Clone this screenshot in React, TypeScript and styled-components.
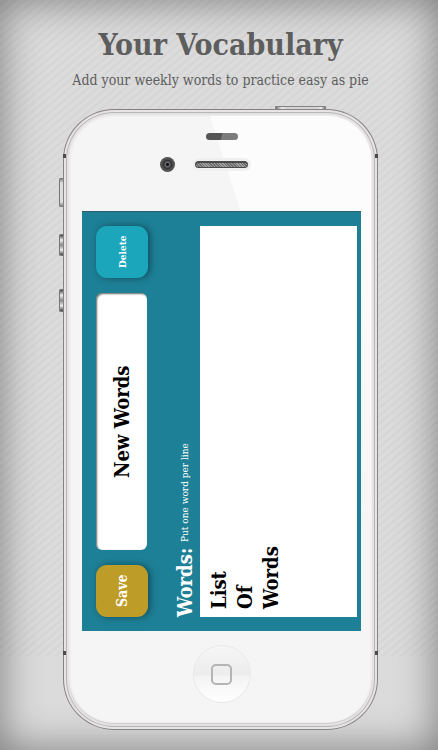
import React from "react";
import styled, { createGlobalStyle } from "styled-components";

const slab = `"DejaVu Serif Condensed", "DejaVu Serif", serif`;

const GlobalStyle = createGlobalStyle`
  *, *::before, *::after { box-sizing: border-box; }
  body { margin: 0; background: #d9d9d9; }
`;

const Page = styled.main`
  position: relative;
  min-height: 100vh;
  padding: 28px 60px 20px 63px;
  font-family: ${slab};
  background:
    linear-gradient(to bottom, transparent 656px, #dbdbdb 657px),
    repeating-linear-gradient(140deg, #dcdcdc 0 2px, #d6d6d6 4px 5px, #dcdcdc 6px);

  &::after {
    content: "";
    position: absolute;
    inset: 0;
    pointer-events: none;
    box-shadow: inset 0 0 42px rgba(0, 0, 0, 0.44);
  }
`;

const Header = styled.header`
  margin: 0 -40px;
  height: 81px;
  text-align: center;
  white-space: nowrap;
  color: #5e5e5e;
`;

const Title = styled.h1`
  margin: 0;
  font-size: 30px;
  line-height: 34px;
  font-weight: 700;
`;

const Tagline = styled.p`
  margin: 8px 0 0;
  font-size: 14px;
  line-height: 20px;
`;

const Phone = styled.section`
  position: relative;
  z-index: 1;
  padding: 0 17px 0 19px;
  border-radius: 51px;
  background: #f5f5f5;
  box-shadow:
    inset 0 0 0 1px #86827f,
    inset 0 0 0 3px #e6e4e5,
    inset 0 0 0 4px #b8b5b6,
    inset 0 0 0 6px #e4e2e3,
    inset 0 -1px 0 6px #cfcfcf,
    inset 0 0 0 8px #efefef;
`;

const Glare = styled.div`
  position: absolute;
  inset: 7px 7px 200px 8px;
  border-radius: 44px 44px 0 0;
  background: linear-gradient(to bottom, #fcfcfc 25%, #f5f5f5);
  clip-path: polygon(139px 0, 100% 0, 100% 100%, 272px 100%);
`;

const SideKey = styled.span<{ $top: number; $length: number; $metal?: boolean }>`
  position: absolute;
  left: -4px;
  top: ${(p) => p.$top}px;
  width: 4px;
  height: ${(p) => p.$length}px;
  border: 1px solid #777;
  border-right-width: 0;
  border-radius: 2px 0 0 2px;
  background: ${(p) =>
    p.$metal
      ? "linear-gradient(#444, #eee 25%, #8a8a8a 50%, #eee 75%, #444)"
      : "linear-gradient(#888, #ddd 15%, #ddd 85%, #888)"};
`;

const PowerKey = styled.span`
  position: absolute;
  right: 52px;
  top: -3px;
  width: 51px;
  height: 3px;
  border: 1px solid #858585;
  border-bottom: 0;
  border-radius: 1px 1px 0 0;
  background: linear-gradient(90deg, #777, #eee 12%, #d5d5d5 20%, #d5d5d5 85%, #eee 92%, #777);
`;

const AntennaGap = styled.span<{ $side: "left" | "right"; $edge: "top" | "bottom" }>`
  position: absolute;
  ${(p) => p.$side}: 0;
  ${(p) => p.$edge}: ${(p) => (p.$edge === "top" ? 45 : 75)}px;
  width: 3px;
  height: 4px;
  background: #4c4a4b;
`;

const TopBezel = styled.div`
  position: relative;
  height: 102px;
  padding-top: 24px;
`;

const Sensor = styled.div`
  width: 32px;
  height: 7px;
  margin: 0 auto;
  border-radius: 4px;
  background: linear-gradient(105deg, #555 48%, #7b7b7b 50%);
`;

const EarRow = styled.div`
  display: grid;
  grid-template-columns: 1fr 53px 1fr;
  align-items: center;
  margin-top: 17px;
`;

const Camera = styled.span`
  justify-self: end;
  width: 15px;
  height: 15px;
  margin-right: 20px;
  border-radius: 50%;
  background: radial-gradient(circle, #111 0 1px, #6a6d72 2px, #333 4px, #555 6px, #3c3c3c);
`;

const Speaker = styled.span`
  height: 7px;
  border: 1px solid #4a4a4a;
  border-top-width: 2px;
  border-radius: 4px;
  background: repeating-linear-gradient(45deg, #6c6c6c 0 1px, #a2a2a2 1px 2px);
  box-shadow: 0 0 0 3px #f0f0f0;
`;

const Display = styled.div`
  aspect-ratio: 279 / 420;
`;

/* The app runs in landscape: inline direction climbs the handset, blocks stack to the right. */
const Screen = styled.form`
  display: flex;
  flex-direction: column;
  width: 100%;
  height: 100%;
  writing-mode: vertical-rl;
  transform: rotate(180deg);
  padding-block: 14px 4px;
  padding-inline: 14px 15px;
  background: #1e8096;
  box-shadow: inset 0 -1px 0 #2c5f6c;
`;

const Toolbar = styled.div`
  display: flex;
  gap: 15px;
  block-size: 52px;
`;

const ToolButton = styled.button<{ $tone: string; $size: number }>`
  flex: none;
  inline-size: 52px;
  block-size: 52px;
  padding: 0;
  border: 0;
  border-radius: 11px;
  writing-mode: vertical-rl;
  font-family: ${slab};
  font-size: ${(p) => p.$size}px;
  font-weight: 700;
  text-align: center;
  color: #fff;
  background: ${(p) => p.$tone};
  box-shadow: -2px 0 7px rgba(0, 30, 45, 0.55);
`;

const NameInput = styled.input`
  flex: 1;
  min-inline-size: 0;
  block-size: 51px;
  padding: 0;
  border: 0;
  border-radius: 6px;
  writing-mode: vertical-rl;
  text-align: center;
  font-family: ${slab};
  font-size: 20px;
  font-weight: 700;
  color: #000;
  background: #fff;
  box-shadow: inset -1px -1px 2px rgba(0, 0, 0, 0.6);
  outline: none;
`;

const ListLabel = styled.label`
  block-size: 52px;
  padding-block-start: 22px;
  line-height: 30px;
  white-space: nowrap;
  font-size: 20px;
  font-weight: 700;
  color: #fff;
`;

const Hint = styled.small`
  margin-inline-start: 6px;
  font-size: 10px;
  font-weight: 400;
`;

const WordList = styled.textarea`
  flex: 1;
  min-block-size: 0;
  inline-size: 100%;
  margin: 0;
  padding-block: 6px;
  padding-inline: 8px;
  border: 0;
  resize: none;
  overflow: hidden;
  writing-mode: vertical-rl;
  font-family: ${slab};
  font-size: 20px;
  line-height: 26px;
  font-weight: 700;
  color: #000;
  background: #fff;
  outline: none;
`;

const BottomBezel = styled.div`
  display: flex;
  justify-content: center;
  height: 99px;
  padding-top: 14px;
`;

const HomeButton = styled.button`
  display: grid;
  place-items: center;
  width: 58px;
  height: 58px;
  padding: 0;
  border: 1px solid #e9e9e9;
  border-radius: 50%;
  background: linear-gradient(#f6f6f6, #ececec 50%, #f4f4f4 55%, #fff);
`;

const HomeGlyph = styled.span`
  width: 21px;
  height: 21px;
  border: 2px solid #b4b4b4;
  border-radius: 5px;
`;

export default function App() {
  return (
    <>
      <GlobalStyle />
      <Page>
        <Header>
          <Title>Your Vocabulary</Title>
          <Tagline>Add your weekly words to practice easy as pie</Tagline>
        </Header>
        <Phone>
          <Glare />
          <SideKey $top={69} $length={29} />
          <SideKey $top={125} $length={22} $metal />
          <SideKey $top={180} $length={23} $metal />
          <PowerKey />
          <AntennaGap $side="left" $edge="top" />
          <AntennaGap $side="right" $edge="top" />
          <AntennaGap $side="left" $edge="bottom" />
          <AntennaGap $side="right" $edge="bottom" />
          <TopBezel>
            <Sensor />
            <EarRow>
              <Camera />
              <Speaker />
            </EarRow>
          </TopBezel>
          <Display>
            <Screen onSubmit={(e) => e.preventDefault()}>
              <Toolbar>
                <ToolButton type="submit" $tone="#bd9d27" $size={14}>
                  Save
                </ToolButton>
                <NameInput aria-label="List name" defaultValue="New Words" />
                <ToolButton type="button" $tone="#1ba6bb" $size={10}>
                  Delete
                </ToolButton>
              </Toolbar>
              <ListLabel htmlFor="words">
                Words:<Hint>Put one word per line</Hint>
              </ListLabel>
              <WordList id="words" spellCheck={false} defaultValue={"List\nOf\nWords"} />
            </Screen>
          </Display>
          <BottomBezel>
            <HomeButton type="button" aria-label="Home">
              <HomeGlyph />
            </HomeButton>
          </BottomBezel>
        </Phone>
      </Page>
    </>
  );
}
